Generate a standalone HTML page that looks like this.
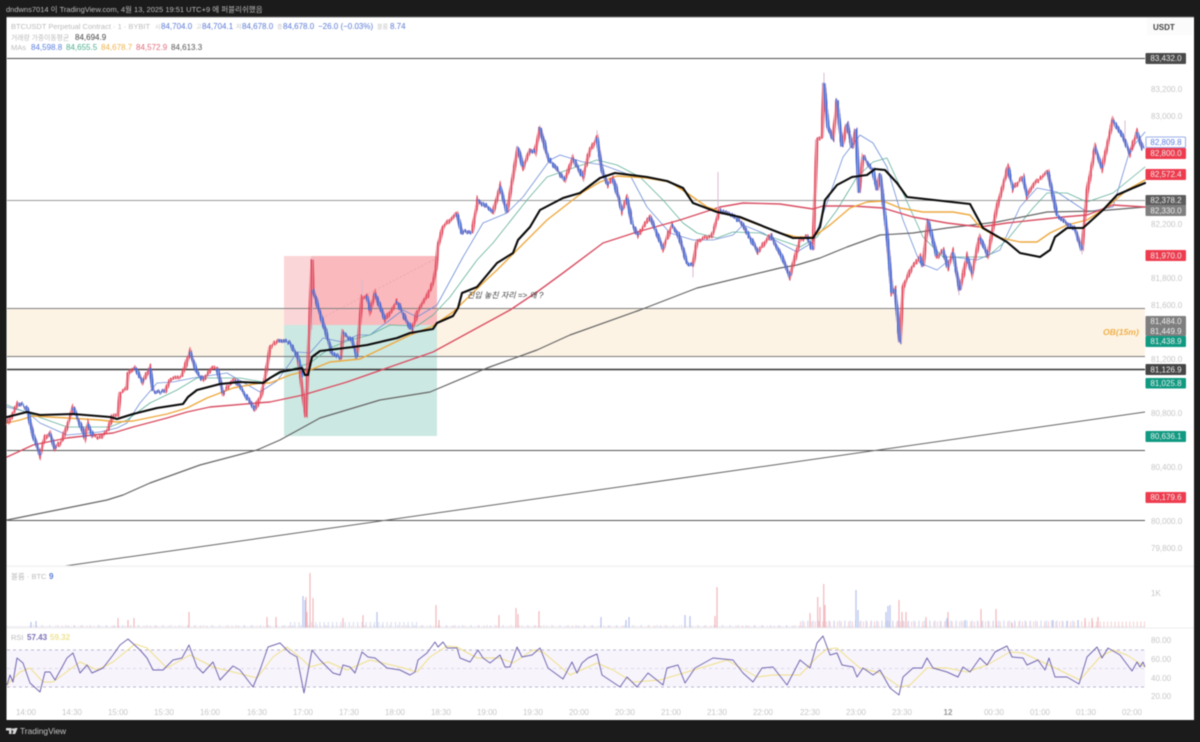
<!DOCTYPE html>
<html><head><meta charset="utf-8"><style>
html,body{margin:0;padding:0;background:#1b1b1b;width:1200px;height:742px;overflow:hidden}
svg{display:block;filter:blur(.4px)}
text{font-family:"Liberation Sans","Noto Sans CJK KR",sans-serif;font-size:8px}
.s{font-size:7.5px}
.ax{fill:#c6c6c6}.lb{fill:#ececec;text-anchor:middle}.t{fill:#c6c6c6;text-anchor:middle}
</style></head><body>
<svg width="1200" height="742" viewBox="0 0 1200 742" xmlns="http://www.w3.org/2000/svg">
<defs>
<pattern id="cr" patternUnits="userSpaceOnUse" width="2.3" height="20"><rect width="1.7" height="20" fill="#e2485c"/></pattern>
<pattern id="cb" patternUnits="userSpaceOnUse" width="2.3" height="20"><rect width="1.7" height="20" fill="#3f6edb"/></pattern>
<filter id="jit" filterUnits="userSpaceOnUse" x="0" y="0" width="1200" height="742" color-interpolation-filters="sRGB">
<feTurbulence type="fractalNoise" baseFrequency="0.42 0.0008" numOctaves="1" seed="4"/>
<feColorMatrix values="1 0 0 0 0 0 1 0 0 0 0 0 1 0 0 0 0 0 0 1" result="n"/>
<feDisplacementMap in="SourceGraphic" in2="n" scale="9" xChannelSelector="A" yChannelSelector="R"/>
</filter>
<clipPath id="vc"><rect x="7" y="567" width="1138" height="60.5"/></clipPath>
</defs>
<rect width="1200" height="742" fill="#1b1b1b"/>
<text x="6" y="12" fill="#bdbdbd" class="s">dndwns7014 이 TradingView.com, 4월 13, 2025 19:51 UTC+9 에 퍼블리쉬했음</text>
<rect x="6.5" y="16.5" width="1187.5" height="703.5" fill="#fff"/>
<rect x="6.5" y="16.5" width="1187.5" height="1" fill="#777"/>

<!-- OB zone and position boxes -->
<rect x="7" y="308" width="1138" height="48" fill="#fdf3e4"/>
<rect x="284" y="256" width="153" height="69" fill="#f9b9bd"/>
<rect x="284" y="256" width="27" height="69" fill="#fbd6d8"/>
<rect x="284" y="325" width="153" height="111" fill="#cce8e2"/>
<path d="M322 318L437 258" stroke="#e9a2a8" stroke-width=".7" stroke-dasharray="2 2" fill="none"/>

<!-- horizontal levels -->
<g fill="none">
<path d="M7 58.5H1145" stroke="#4c4c4c"/>
<path d="M7 200.5H1145" stroke="#9a9a9a"/>
<path d="M7 308.5H1145" stroke="#808080"/>
<path d="M7 356.5H1145" stroke="#777"/>
<path d="M7 369.5H1145" stroke="#333" stroke-width="1.6"/>
<path d="M7 450.5H1145" stroke="#555"/>
<path d="M7 520.5H1145" stroke="#555"/>
<path d="M65 566L1145 412" stroke="#666" stroke-width="1"/>
</g>

<!-- pane separators -->
<rect x="7" y="565.5" width="1187" height="1.5" fill="#f2f2f2"/>
<rect x="7" y="627.5" width="1187" height="1" fill="#eeeeee"/>

<!-- thin MAs -->
<g fill="none" stroke-linejoin="round" stroke-linecap="round">
<polyline stroke="#6f8ed8" stroke-width=".8" points="7,407 27,412 40,423 67,435 100,432 117,428 127,423 140,403 157,383 173,382 193,378 227,373 260,392 277,381 290,363 297,352 310,353 323,338 342,342 358,335 370,335 387,322 403,310 417,317 437,305 463,257 483,223 507,213 523,197 550,160 560,155 583,162 603,165 630,175 647,207 670,233 693,240 713,240 733,235 743,225 763,233 780,243 797,252 813,242 827,203 843,157 860,135 873,143 887,167 903,220 920,263 937,270 953,257 977,260 1000,250 1020,207 1037,188 1057,192 1087,212 1113,207 1130,150 1145,132"/>
<polyline stroke="#62b09a" stroke-width=".8" points="7,405 33,415 67,427 110,427 127,420 150,403 177,390 197,378 240,378 263,382 283,372 310,363 330,348 350,340 370,335 390,325 417,326 433,315 450,297 477,260 493,243 527,200 547,177 573,168 597,160 617,165 640,177 663,200 683,223 697,233 717,238 733,232 760,233 780,240 800,247 817,237 837,210 857,177 873,162 887,158 903,193 923,237 943,257 963,257 987,257 1007,240 1033,208 1047,193 1067,193 1087,202 1113,193 1145,167"/>
<polyline stroke="#666" stroke-width="1.2" points="7,520 67,508 107,500 123,495 150,483 200,465 257,450 280,440 320,418 380,400 430,392 487,368 537,350 570,335 640,310 697,288 780,268 797,265 820,258 847,247 880,235 913,233 947,228 997,222 1047,212 1097,211 1145,207"/>
<polyline stroke="#d94f63" stroke-width="1.4" points="7,457 33,445 67,438 93,435 113,433 133,427 167,418 187,412 210,407 257,403 270,402 303,395 347,382 387,368 433,352 477,328 510,310 537,292 563,273 603,243 637,232 680,220 720,207 743,203 780,204 813,209 823,206 853,206 883,208 913,217 947,223 980,227 1007,223 1063,217 1087,215 1113,205 1145,207"/>
<polyline stroke="#eea93f" stroke-width="1.4" points="7,423 20,420 33,416 67,418 100,420 117,422 133,421 167,414 187,408 207,398 233,388 260,383 270,383 290,375 310,370 330,362 360,359 383,348 410,335 433,326 453,312 483,283 497,270 547,220 583,192 600,182 617,176 647,178 670,182 690,195 707,207 730,214 780,233 797,237 813,237 830,225 850,208 867,202 883,201 900,208 923,212 953,212 970,215 980,227 997,237 1020,242 1037,242 1050,233 1067,225 1087,220 1107,207 1127,190 1145,180"/>
</g>

<!-- price candles -->
<g filter="url(#jit)">
<g transform="translate(4.5 0)" fill="none" stroke-linejoin="miter" stroke-linecap="butt">
<path stroke="#d9b9d0" stroke-width="1" d="M718 173V215M824 73V90M693 265V277M306 376V417M362 280V310M597 130V140M1125 120V140M1082 245V255M959 285V295M540 125V135M312 258V330"/>
<path stroke="url(#cr)" stroke-width="3.4" d="M7 425L18 403L27 407L33 435L40 455L45 438L50 433L55 448L62 440L73 408L82 428L85 438L88 425L93 437L100 437L108 430L113 415L118 415L120 393L127 388L128 373L135 367L143 382L150 368L153 390L165 392L170 380L182 377L190 352L197 373L203 380L212 368L217 368L223 393L235 380L247 397L255 410L262 392L267 367L270 347L278 340L290 343L298 357L306 417L312 260L313 290L323 323L332 353L341 358L343 333L352 340L357 357L362 297L367 297L370 310L375 293L385 320L397 302L408 323L412 330L418 310L427 297L433 283L436 270L438 247L443 227L457 213L462 233L472 232L478 200L493 212L500 187L507 212L518 147L523 167L530 150L535 153L540 127L548 158L565 180L573 158L583 177L590 150L597 138L602 170L608 185L613 178L622 210L627 198L632 223L638 235L650 217L663 248L672 225L678 233L687 263L693 265L697 242L712 235L720 210L732 215L742 223L758 252L770 235L780 253L790 277L800 240L807 237L813 250L817 140L822 137L824 83L828 127L833 140L837 100L842 147L847 123L852 148L856 128L859 193L863 157L873 170L877 190L880 173L887 233L892 293L895 290L900 343L903 287L912 267L920 257L923 267L928 220L937 257L943 250L948 267L953 253L960 290L967 257L972 273L980 237L988 255L997 207L1008 168L1013 188L1023 177L1027 195L1035 183L1048 172L1057 215L1067 223L1075 230L1082 250L1087 193L1095 148L1102 168L1113 120L1122 135L1130 153L1137 132L1143 150"/>
<path stroke="url(#cb)" stroke-width="3.4" d="M18 403L27 407L33 435L40 455M50 433L55 448M73 408L82 428L85 438M88 425L93 437M135 367L143 382M150 368L153 390L165 392M190 352L197 373L203 380M217 368L223 393M235 380L247 397L255 410M278 340L290 343L298 357L304 376M313 290L323 323L332 353L341 358M343 333L352 340L357 357M367 297L370 310M375 293L385 320M397 302L408 323L412 330M457 213L462 233L472 232M478 200L493 212M500 187L507 212M518 147L523 167M530 150L535 153M540 127L548 158L565 180M573 158L583 177M597 138L602 170L608 185M613 178L622 210M627 198L632 223L638 235M650 217L663 248M672 225L678 233L687 263L693 265M720 210L732 215L742 223L758 252M770 235L780 253L790 277M807 237L813 250M824 83L828 127L833 140M837 100L842 147M847 123L852 148M856 128L859 193M863 157L873 170L877 190M880 173L887 233L892 293M895 290L900 343M920 257L923 267M928 220L937 257M943 250L948 267M953 253L960 290M967 257L972 273M980 237L988 255M1008 168L1013 188M1023 177L1027 195M1048 172L1057 215L1067 223L1075 230L1082 250M1095 148L1102 168M1113 120L1122 135L1130 153M1137 132L1143 150"/>
</g>
</g>

<!-- black MA -->
<polyline fill="none" stroke="#0b0b0b" stroke-width="2.1" stroke-linejoin="round" stroke-linecap="round" points="7,417 27,412 40,415 73,414 110,417 117,419 133,414 157,408 183,404 188,397 197,390 220,384 240,382 263,383 270,378 280,372 302,368 305,375 308,375 312,357 320,351 353,347 367,345 397,338 410,333 433,329 437,323 453,316 458,308 462,293 477,287 497,263 513,253 518,240 530,227 540,210 563,198 580,193 600,178 615,173 647,177 667,181 683,188 693,203 717,212 740,217 780,233 793,238 813,238 820,227 825,200 837,185 852,177 867,175 875,169 885,170 897,183 907,197 943,201 970,204 977,217 983,228 1007,242 1020,253 1040,257 1050,250 1055,237 1067,228 1083,228 1103,210 1117,195 1133,188 1145,183"/>

<text x="467" y="298" fill="#444" font-style="italic">진입 놓친 자리 =&gt; 왜 ?</text>
<text x="1103" y="335" fill="#efb04a" font-weight="bold" font-style="italic" style="font-size:8.6px">OB(15m)</text>

<!-- legend -->
<text x="11" y="29" fill="#bbb" class="s">BTCUSDT Perpetual Contract · 1 · BYBIT</text>
<g fill="#c4c4c4" class="s"><text x="155" y="29" style="font-size:6px">시</text><text x="196" y="29" style="font-size:6px">고</text><text x="236" y="29" style="font-size:6px">저</text><text x="277" y="29" style="font-size:6px">종</text><text x="377" y="29" style="font-size:6px">볼륨</text></g>
<g fill="#5b7ad6"><text x="161" y="29">84,704.0</text><text x="202" y="29">84,704.1</text><text x="242" y="29">84,678.0</text><text x="283" y="29">84,678.0</text><text x="318" y="29">−26.0 (−0.03%)</text><text x="390" y="29">8.74</text></g>
<text x="11" y="40" fill="#bbb" style="font-size:6.8px">거래량 가중이동평균</text><text x="75" y="40" fill="#444">84,694.9</text>
<text x="11" y="50" fill="#bbb" class="s">MAs</text>
<text x="31" y="50" fill="#5b7ee0">84,598.8</text><text x="66" y="50" fill="#4cb08c">84,655.5</text><text x="101" y="50" fill="#f0b24a">84,678.7</text><text x="136" y="50" fill="#e06a7a">84,572.9</text><text x="171" y="50" fill="#555">84,613.3</text>

<!-- price axis -->
<rect x="1147" y="18" width="45" height="17" fill="#fbfbfb"/>
<text x="1153" y="30" fill="#444" font-weight="bold">USDT</text>
<g class="ax">
<text x="1151" y="92">83,200.0</text><text x="1151" y="119">83,000.0</text><text x="1151" y="227">82,200.0</text><text x="1151" y="281">81,800.0</text><text x="1151" y="308">81,600.0</text><text x="1151" y="362">81,200.0</text><text x="1151" y="416">80,800.0</text><text x="1151" y="470">80,400.0</text><text x="1151" y="524">80,000.0</text><text x="1151" y="551">79,800.0</text>
<text x="1151" y="643">80.00</text><text x="1151" y="662">60.00</text><text x="1151" y="681">40.00</text><text x="1151" y="699">20.00</text><text x="1151" y="596">1K</text>
</g>
<g>
<rect x="1145.5" y="53" width="40.5" height="11" rx="1" fill="#4a4a4a"/>
<rect x="1146" y="137" width="39.5" height="10.5" rx="1" fill="#fff" stroke="#7e97e4" stroke-width=".8"/>
<rect x="1145.5" y="148" width="40.5" height="11" rx="1" fill="#ee3b4e"/>
<rect x="1145.5" y="169" width="40.5" height="11" rx="1" fill="#ee3b4e"/>
<rect x="1145.5" y="195" width="40.5" height="11" rx="1" fill="#5c5c5c"/>
<rect x="1145.5" y="205" width="40.5" height="11" rx="1" fill="#808080"/>
<rect x="1145.5" y="250" width="40.5" height="11" rx="1" fill="#ee3b4e"/>
<rect x="1145.5" y="316" width="40.5" height="20" rx="1" fill="#7f7f7f"/>
<rect x="1145.5" y="336" width="40.5" height="11" rx="1" fill="#119a82"/>
<rect x="1145.5" y="364" width="40.5" height="11" rx="1" fill="#454545"/>
<rect x="1145.5" y="378" width="40.5" height="10.5" rx="1" fill="#119a82"/>
<rect x="1145.5" y="431" width="40.5" height="11" rx="1" fill="#119a82"/>
<rect x="1145.5" y="492" width="40.5" height="11" rx="1" fill="#ee3b4e"/>
<g class="lb">
<text x="1166" y="61">83,432.0</text>
<text x="1166" y="145" style="fill:#5b7ee0">82,809.8</text>
<text x="1166" y="156">82,800.0</text>
<text x="1166" y="177">82,572.4</text>
<text x="1166" y="203">82,378.2</text>
<text x="1166" y="213.5">82,330.0</text>
<text x="1166" y="258.5">81,970.0</text>
<text x="1166" y="324">81,484.0</text>
<text x="1166" y="334">81,449.9</text>
<text x="1166" y="344">81,438.9</text>
<text x="1166" y="372.5">81,126.9</text>
<text x="1166" y="386">81,025.8</text>
<text x="1166" y="439">80,636.1</text>
<text x="1166" y="500">80,179.6</text>
</g>
</g>

<!-- volume -->
<text x="11" y="579" fill="#bbb" class="s">볼륨 · BTC</text><text x="49" y="579" fill="#5b7ad6" font-weight="bold">9</text>
<g fill="none" clip-path="url(#vc)">
<path d="M7 627H1145" stroke="#e4e1ee" stroke-width="2" stroke-dasharray="1 1"/>
<path d="M30 628H800" stroke="#f7d6d8" stroke-width="5" stroke-dasharray="1 5.3"/>
<path d="M33 628H800" stroke="#d6def4" stroke-width="6" stroke-dasharray="1 7.1"/>
<path d="M800 628H1145" stroke="#f6cfd2" stroke-width="13" stroke-dasharray="1 2.7"/>
<path d="M802 628H1080" stroke="#d0daf4" stroke-width="15" stroke-dasharray="1 4.3"/>
<path d="M290 628H420" stroke="#d8dcef" stroke-width="12" stroke-dasharray="1 3.2"/>
<path stroke="#f2b2b8" stroke-width="1.1" d="M310 628V573M313 628V598M307 628V612M306 628V597M189 628V612M118 628V618M128 628V620M134 628V618M267 628V617M276 628V617M343 628V618M363 628V615M436 628V605M439 628V620M499 628V615M516 628V608M518 628V614M539 628V611M717 628V587M715 628V616M823.7 628V584M817.7 628V597M810 628V613M820 628V607M825 628V605M948 628V612M981 628V609M996 628V609M899 628V600M906 628V612M902 628V612M926 628V617M1085 628V618M1092 628V618M1098 628V617M1012 628V623"/>
<path stroke="#b7c5ee" stroke-width="1.2" d="M303 628V596M305 628V600M377 628V612M31 628V622M36 628V621M601 628V617M629 628V617M626 628V620M685 628V615M690 628V616M856 628V590M858 628V610M888 628V606M890 628V605M886 628V612M1053 628V620M1067 628V621M1078 628V620M947 628V618M965 628V620"/>
</g>

<!-- RSI -->
<rect x="7" y="650" width="1138" height="37" fill="#f7f4fc"/>
<path d="M7 650H1145M7 687H1145" stroke="#a79fbd" stroke-width=".8" stroke-dasharray="3 3" fill="none"/>
<path d="M7 668.5H1145" stroke="#d3cde0" stroke-width=".7" stroke-dasharray="3 3" fill="none"/>
<text x="11" y="640" fill="#bbb" class="s">RSI</text><text x="27" y="640" fill="#7a6fb5" font-weight="bold">57.43</text><text x="50" y="640" fill="#efe394" font-weight="bold">59.32</text>
<polyline fill="none" stroke="#f0e08a" stroke-width="1" stroke-linejoin="round" points="7,685 20,672 30,668 43,682 53,682 80,662 97,670 113,662 135,644 147,648 167,668 190,655 213,667 257,678 273,657 287,647 303,660 310,667 328,662 347,670 370,660 400,667 417,672 430,657 447,646 457,647 477,658 500,658 513,663 533,650 543,652 570,675 597,663 613,670 633,682 660,680 687,672 727,660 757,677 773,675 800,675 817,657 827,649 837,648 847,657 860,668 880,673 900,687 910,685 927,668 947,668 967,672 987,665 1010,652 1023,653 1053,667 1080,680 1100,657 1113,650 1127,655 1145,667"/>
<polyline fill="none" stroke="#7368b0" stroke-width="1" stroke-linejoin="round" points="7,685 10,675 13,682 17,658 23,663 30,683 40,692 45,672 50,672 55,680 67,658 73,653 80,673 87,665 92,673 103,668 113,655 120,645 128,639 140,650 147,658 153,670 163,670 173,660 182,658 189,645 197,667 203,673 213,662 220,680 233,666 240,670 253,687 260,670 268,647 280,643 290,653 297,657 304,693 312,650 320,660 333,673 340,675 343,665 350,667 355,673 362,652 368,657 375,658 387,668 400,670 410,675 415,672 418,660 427,653 435,642 438,647 443,642 447,648 457,648 460,658 470,662 478,650 483,658 490,663 500,655 505,667 510,667 517,647 522,657 532,655 540,648 548,668 563,679 572,662 577,673 582,663 588,658 597,654 602,675 620,687 627,677 637,687 648,673 663,685 667,668 678,665 685,683 695,668 713,658 733,660 743,673 753,682 762,668 773,667 787,685 800,660 810,668 817,643 823,636 830,655 837,653 842,665 853,667 857,677 863,668 873,675 880,670 890,688 899,695 903,677 913,668 922,668 927,658 933,668 947,672 958,677 963,667 970,672 980,658 987,665 995,652 1007,646 1012,657 1023,658 1027,665 1038,660 1045,670 1049,658 1055,677 1067,677 1079,684 1087,657 1097,647 1102,658 1108,648 1120,655 1132,671 1137,662 1140,667 1143,662 1145,667"/>

<!-- time axis -->
<g class="t">
<text x="26" y="715">14:00</text><text x="72" y="715">14:30</text><text x="118" y="715">15:00</text><text x="164" y="715">15:30</text><text x="210" y="715">16:00</text><text x="257" y="715">16:30</text><text x="303" y="715">17:00</text><text x="349" y="715">17:30</text><text x="395" y="715">18:00</text><text x="441" y="715">18:30</text><text x="487" y="715">19:00</text><text x="533" y="715">19:30</text><text x="579" y="715">20:00</text><text x="625" y="715">20:30</text><text x="671" y="715">21:00</text><text x="717" y="715">21:30</text><text x="763" y="715">22:00</text><text x="810" y="715">22:30</text><text x="856" y="715">23:00</text><text x="902" y="715">23:30</text><text x="948" y="715" font-weight="bold" style="fill:#999">12</text><text x="994" y="715">00:30</text><text x="1040" y="715">01:00</text><text x="1086" y="715">01:30</text><text x="1132" y="715">02:00</text>
</g>

<!-- footer -->
<path d="M6 728H11.5V734H9V730.5H6Z" fill="#d8d8d8"/><circle cx="13" cy="729.5" r="1.3" fill="#d8d8d8"/><path d="M14.6 728H17.7L15.2 734H12.2Z" fill="#d8d8d8"/>
<text x="20" y="734" fill="#c4c4c4" style="font-size:8.4px">TradingView</text>
</svg>
</body></html>
